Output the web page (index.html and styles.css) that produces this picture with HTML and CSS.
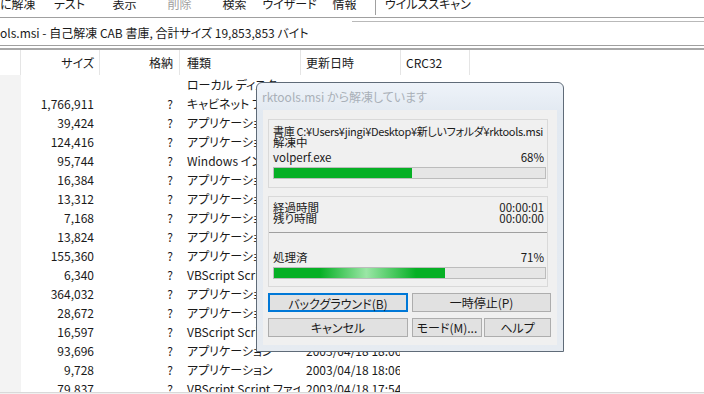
FILE: index.html
```html
<!DOCTYPE html>
<html lang="ja">
  <head>
    <meta charset="UTF-8" />
    <title>rktools.msi から解凍しています</title>
    <link rel="stylesheet" href="styles.css">
  </head>
  <body>
    <div class="toolbar">
      <span class="tool first">に解凍</span>
      <span class="tool">テスト</span>
      <span class="tool">表示</span>
      <span class="tool off">削除</span>
      <span class="tool">検索</span>
      <span class="tool">ウイザード</span>
      <span class="tool">情報</span>
      <span class="sep"></span>
      <span class="tool wide">ウイルススキャン</span>
    </div>
    <div class="address">
      <div class="path">ols.msi - 自己解凍 CAB 書庫, 合計サイズ 19,853,853 バイト</div>
      <div class="rest"></div>
    </div>
    <div class="split"></div>

    <div class="list">
      <div class="row head">
        <span></span><span class="num">サイズ</span><span class="num">格納</span><span>種類</span><span>更新日時</span><span>CRC32</span><span></span>
      </div>
      <div class="row"><span></span><span class="num"></span><span class="num"></span><span>ローカル ディスク</span><span></span><span></span><span></span></div>
      <div class="row"><span></span><span class="num">1,766,911</span><span class="num">?</span><span>キャビネット ファイル</span><span>2003/04/18 18:06</span><span></span><span></span></div>
      <div class="row"><span></span><span class="num">39,424</span><span class="num">?</span><span>アプリケーション</span><span>2003/04/18 18:06</span><span></span><span></span></div>
      <div class="row"><span></span><span class="num">124,416</span><span class="num">?</span><span>アプリケーション</span><span>2003/04/18 18:06</span><span></span><span></span></div>
      <div class="row"><span></span><span class="num">95,744</span><span class="num">?</span><span>Windows インストーラー パッケージ</span><span>2003/04/18 18:06</span><span></span><span></span></div>
      <div class="row"><span></span><span class="num">16,384</span><span class="num">?</span><span>アプリケーション</span><span>2003/04/18 18:06</span><span></span><span></span></div>
      <div class="row"><span></span><span class="num">13,312</span><span class="num">?</span><span>アプリケーション</span><span>2003/04/18 18:06</span><span></span><span></span></div>
      <div class="row"><span></span><span class="num">7,168</span><span class="num">?</span><span>アプリケーション</span><span>2003/04/18 18:06</span><span></span><span></span></div>
      <div class="row"><span></span><span class="num">13,824</span><span class="num">?</span><span>アプリケーション</span><span>2003/04/18 18:06</span><span></span><span></span></div>
      <div class="row"><span></span><span class="num">155,360</span><span class="num">?</span><span>アプリケーション</span><span>2003/04/18 18:06</span><span></span><span></span></div>
      <div class="row"><span></span><span class="num">6,340</span><span class="num">?</span><span>VBScript Script ファイル</span><span>2003/04/18 17:54</span><span></span><span></span></div>
      <div class="row"><span></span><span class="num">364,032</span><span class="num">?</span><span>アプリケーション</span><span>2003/04/18 18:06</span><span></span><span></span></div>
      <div class="row"><span></span><span class="num">28,672</span><span class="num">?</span><span>アプリケーション</span><span>2003/04/18 18:06</span><span></span><span></span></div>
      <div class="row"><span></span><span class="num">16,597</span><span class="num">?</span><span>VBScript Script ファイル</span><span>2003/04/18 17:54</span><span></span><span></span></div>
      <div class="row"><span></span><span class="num">93,696</span><span class="num">?</span><span>アプリケーション</span><span>2003/04/18 18:06</span><span></span><span></span></div>
      <div class="row"><span></span><span class="num">9,728</span><span class="num">?</span><span>アプリケーション</span><span>2003/04/18 18:06</span><span></span><span></span></div>
      <div class="row"><span></span><span class="num">79,837</span><span class="num">?</span><span>VBScript Script ファイル</span><span>2003/04/18 17:54</span><span></span><span></span></div>
    </div>
    <div class="status"></div>

    <div class="dialog">
      <div class="caption">rktools.msi から解凍しています</div>
      <div class="client">
        <div class="panel first-panel">
          <div class="line path-line">書庫 C:¥Users¥jingi¥Desktop¥新しいフォルダ¥rktools.msi</div>
          <div class="line">解凍中</div>
          <div class="pair file"><span>volperf.exe</span><span class="pct">68%</span></div>
          <div class="bar"><div class="fill" style="width: 51%"></div></div>
        </div>
        <div class="panel second-panel">
          <div class="pair"><span>経過時間</span><span class="pct">00:00:01</span></div>
          <div class="pair"><span>残り時間</span><span class="pct">00:00:00</span></div>
          <div class="rule"></div>
          <div class="pair done"><span>処理済</span><span class="pct">71%</span></div>
          <div class="bar"><div class="fill glow" style="width: 63%"></div></div>
        </div>
        <div class="buttons">
          <button class="btn half focus">バックグラウンド(B)</button>
          <button class="btn half pause">一時停止(P)</button>
        </div>
        <div class="buttons">
          <button class="btn half">キャンセル</button>
          <button class="btn mode">モード(M)...</button>
          <button class="btn help">ヘルプ</button>
        </div>
      </div>
    </div>
  </body>
</html>
```

FILE: styles.css
```css
* {
  margin: 0;
  padding: 0;
  box-sizing: border-box;
}

body {
  width: 704px;
  height: 394px;
  overflow: hidden;
  position: relative;
  background: #fff;
  color: #1a1a1a;
  font-family: "Noto Sans CJK JP", "Noto Sans", sans-serif;
  font-size: 12px;
  font-feature-settings: "palt";
}

/* toolbar, cut at the top */
.toolbar {
  height: 18px;
  display: flex;
  overflow: hidden;
  border-bottom: 1px solid #a0a0a0;
}

.tool {
  width: 55px;
  flex: none;
  text-align: center;
  line-height: 12px;
  margin-top: -2px;
  white-space: nowrap;
}

.tool.first {
  width: 42px;
  text-align: left;
}

.tool.off {
  color: #a0a0a0;
}

.tool.wide {
  width: auto;
  margin-left: 9px;
}

.sep {
  width: 1px;
  height: 15px;
  margin-left: 3px;
  background: #a0a0a0;
}

.address {
  height: 27px;
  display: flex;
}

.path {
  width: 352px;
  padding-top: 3px;
  line-height: 24px;
  white-space: nowrap;
}

.rest {
  flex: 1;
  margin-top: 3px;
  border-top: 1px solid #b9b9b9;
}

.split {
  height: 5px;
  border-top: 1px solid #a0a0a0;
  border-bottom: 2px solid #a8a8a8;
}

/* file list */
.list {
  height: 342px;
  overflow: hidden;
}

.row {
  display: grid;
  grid-template-columns: 21px 79px 80px 121px 100px 69px 1fr;
  height: 19px;
  line-height: 19px;
}

.row span {
  white-space: nowrap;
  overflow: hidden;
  border-right: 1px solid transparent;
  padding-left: 5px;
}

.row span:first-child {
  background: #f3f3f3;
}

.row span:nth-child(4) {
  padding-left: 7px;
}

.row .num {
  text-align: right;
  padding-left: 0;
  padding-right: 5px;
}

.row .num + .num {
  padding-right: 6px;
}

.row.head {
  height: 25px;
  line-height: 25px;
}

.row.head span {
  border-right-color: #e5e5e5;
}

.row.head span:first-child {
  background: #fff;
}

.row.head span:last-child {
  border-right: 0;
}

.status {
  height: 2px;
  background: #f0f0f0;
  border-top: 1px solid #d9d9d9;
}

/* progress dialog */
.dialog {
  position: absolute;
  left: 256px;
  top: 82px;
  width: 308px;
  height: 270px;
  border: 1px solid #5f6b78;
  border-radius: 6px 6px 0 0;
  background: linear-gradient(#eef3f9, #e2e9f1 30px, #e6ebf1);
}

.caption {
  height: 27px;
  padding-left: 5px;
  line-height: 27px;
  color: #a9b0b8;
  white-space: nowrap;
}

.client {
  height: 235px;
  margin: 0 6px;
  padding: 9px 0 0 5px;
  background: #f0f0f0;
}

.panel {
  width: 280px;
  border: 1px solid #d9d9d9;
  padding: 0 1px 0 4px;
  font-size: 11.5px;
}

.first-panel {
  height: 69px;
  padding-top: 6px;
}

.second-panel {
  height: 91px;
  margin-top: 8px;
  padding-top: 5px;
}

.line {
  line-height: 11px;
  white-space: nowrap;
}

.path-line {
  font-size: 11px;
  letter-spacing: -0.3px;
}

.pair {
  display: flex;
  justify-content: space-between;
  line-height: 11px;
}

.pct {
  padding-right: 2px;
}

.pair.file {
  margin-top: 3px;
  line-height: 12px;
}

.pair.done {
  margin-top: 18px;
  line-height: 12px;
}

.rule {
  margin: 8px -1px 0 -4px;
  border-top: 1px solid #a0a0a0;
}

.bar {
  height: 12px;
  margin-top: 4px;
  border: 1px solid #bcbcbc;
  background: #e6e6e6;
}

.fill {
  height: 100%;
  background: #06b025;
}

.fill.glow {
  background: linear-gradient(to right, #06b025 0%, #06b025 27%, #9be6a6 54%, #06b025 83%, #06b025 100%);
}

.buttons {
  display: flex;
  margin-top: 6px;
}

.buttons:first-of-type {
  margin-top: 9px;
}

.btn {
  height: 19px;
  border: 1px solid #adadad;
  background: #e1e1e1;
  color: #1a1a1a;
  font: inherit;
  font-size: 12px;
  line-height: 17px;
  white-space: nowrap;
}

.btn.half {
  width: 140px;
}

.btn.pause {
  width: 139px;
  margin-left: 4px;
}

.btn.focus {
  border: 2px solid #0078d7;
}

.btn.mode {
  width: 70px;
  margin-left: 4px;
}

.btn.help {
  width: 67px;
  margin-left: 2px;
}
```
